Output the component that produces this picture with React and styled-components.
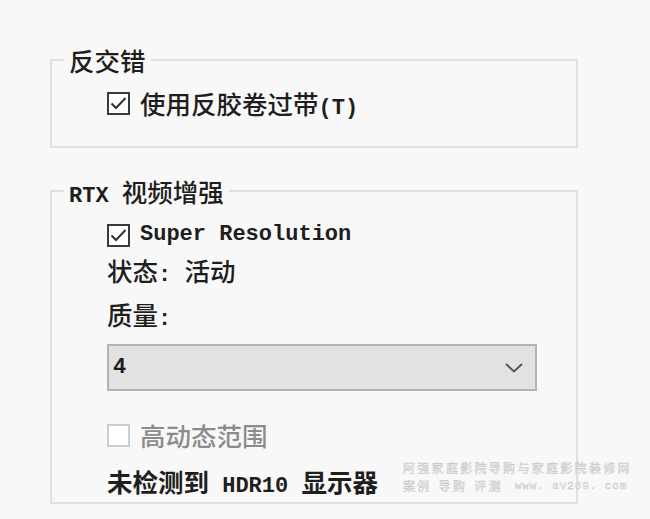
import React from "react";
import styled, { createGlobalStyle } from "styled-components";

const GlobalStyle = createGlobalStyle`
  html, body {
    margin: 0;
    padding: 0;
    background: #f8f8f8;
  }
  body {
    font-family: "Noto Sans CJK SC", "Noto Sans", sans-serif;
    color: #1e1e1e;
  }
`;

const Page = styled.div`
  position: relative;
  width: 650px;
  height: 519px;
  padding: 45px 0 0 50px;
  box-sizing: border-box;
  overflow: hidden;
`;

const Group = styled.fieldset`
  width: 528px;
  min-width: 0;
  box-sizing: border-box;
  margin: ${p => p.$top || 0}px 0 0 0;
  padding: 0;
  border: 2px solid #e0e0e0;
`;

const Legend = styled.legend`
  height: 30px;
  margin-left: 12px;
  padding: 0 5px;
  font-size: 25.5px;
  line-height: 30px;
  font-weight: 500;
  white-space: pre;
`;

const Body = styled.div`
  display: flex;
  flex-direction: column;
  padding: ${p => p.$pad};
  padding-left: 55px;
`;

const Row = styled.div`
  display: flex;
  align-items: center;
  gap: 10px;
  height: 34px;
  margin-top: ${p => p.$mt || 0}px;
  font-size: 25.5px;
  line-height: 34px;
  font-weight: ${p => (p.$bold ? 600 : 500)};
  color: ${p => (p.$disabled ? "#8c8c8c" : "#1e1e1e")};
  white-space: pre;
`;

const Mono = styled.span`
  font-family: "Liberation Mono", monospace;
  font-size: 22px;
  line-height: 1;
  font-weight: 700;
`;

const Box = styled.span`
  width: 23px;
  height: 23px;
  box-sizing: border-box;
  border: 2px solid ${p => (p.$disabled ? "#cdcdcd" : "#3a3a3a")};
  background: #fff;
  display: flex;
  align-items: center;
  justify-content: center;
  flex: none;
`;

const Select = styled.div`
  display: flex;
  align-items: center;
  justify-content: space-between;
  width: 430px;
  height: 47px;
  box-sizing: border-box;
  margin-top: ${p => p.$mt || 0}px;
  padding: 0 12px 0 4px;
  background: #e2e2e2;
  border: 2px solid #b3b3b3;
`;

const Watermark = styled.div`
  position: absolute;
  left: 403px;
  top: 459px;
  display: flex;
  flex-direction: column;
  font-size: 12px;
  line-height: 18px;
  letter-spacing: 2.3px;
  color: #f1f1f1;
  -webkit-text-stroke: 0.4px #c4c4c4;
  white-space: nowrap;
`;

const WmLine = styled.div`
  display: flex;
  align-items: center;
  gap: 7px;
`;

const WmUrl = styled.span`
  font-family: "Liberation Mono", monospace;
  font-size: 11px;
  letter-spacing: 0.9px;
  margin-left: 5px;
`;

const Check = ({ checked, disabled }) => (
  <Box $disabled={disabled}>
    {checked && (
      <svg width="19" height="19" viewBox="0 0 19 19">
        <polyline points="2.5,9.5 7,14 16.5,4" fill="none" stroke="#333" strokeWidth="2" />
      </svg>
    )}
  </Box>
);

const Chevron = () => (
  <svg width="18" height="10" viewBox="0 0 18 10">
    <polyline points="1,1 9,8.5 17,1" fill="none" stroke="#555" strokeWidth="2" />
  </svg>
);

export default function App() {
  return (
    <Page>
      <GlobalStyle />
      <Group>
        <Legend>反交错</Legend>
        <Body $pad="11px 0 26px">
          <Row>
            <Check checked />
            <span>
              使用反胶卷过带<Mono>(T)</Mono>
            </span>
          </Row>
        </Body>
      </Group>

      <Group $top={28}>
        <Legend>
          <Mono>RTX </Mono>视频增强
        </Legend>
        <Body $pad="12px 0 4px">
          <Row>
            <Check checked />
            <Mono>Super Resolution</Mono>
          </Row>
          <Row $mt={1}>
            <span>
              状态<Mono>: </Mono>活动
            </span>
          </Row>
          <Row $mt={10}>
            <span>
              质量<Mono>:</Mono>
            </span>
          </Row>
          <Select $mt={13}>
            <Mono>4</Mono>
            <Chevron />
          </Select>
          <Row $mt={27} $disabled>
            <Check disabled />
            <span>高动态范围</span>
          </Row>
          <Row $mt={12} $bold>
            <span>
              未检测到<Mono> HDR10 </Mono>显示器
            </span>
          </Row>
        </Body>
      </Group>

      <Watermark>
        <WmLine>阿强家庭影院导购与家庭影院装修网</WmLine>
        <WmLine>
          <span>案例</span>
          <span>导购</span>
          <span>评测</span>
          <WmUrl>www. av269. com</WmUrl>
        </WmLine>
      </Watermark>
    </Page>
  );
}
